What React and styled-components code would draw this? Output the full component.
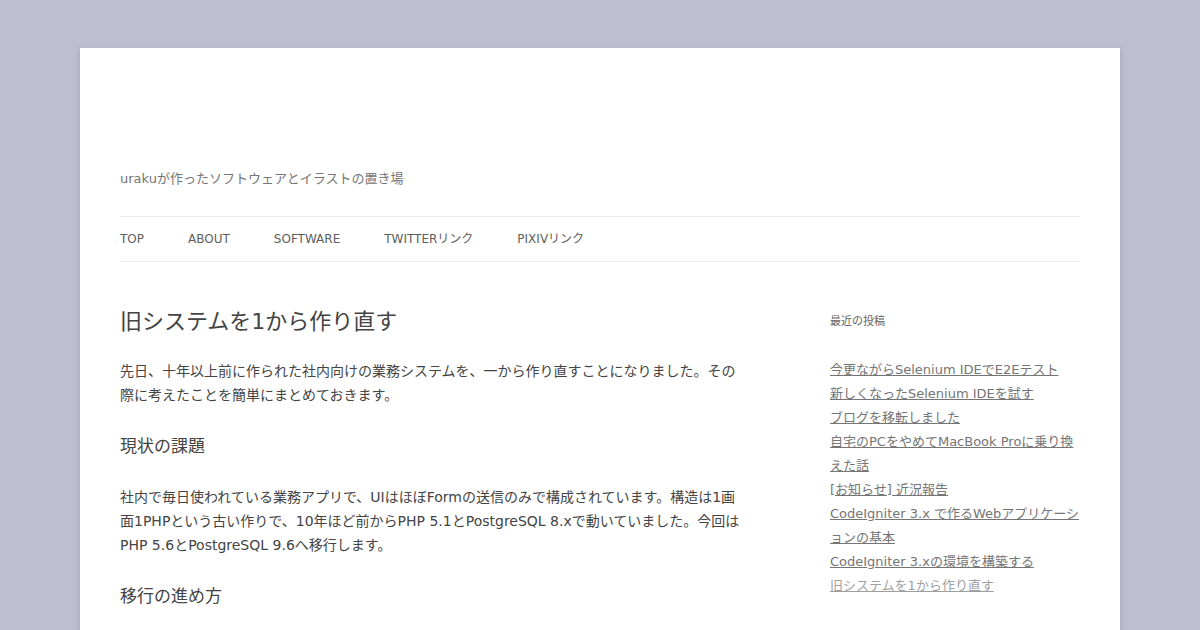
import React from "react";
import styled, { createGlobalStyle } from "styled-components";

const GlobalStyle = createGlobalStyle`
  html, body {
    margin: 0;
    padding: 0;
  }
  body {
    background-color: #bdbecf;
    font-family: "DejaVu Sans", "Noto Sans CJK JP", sans-serif;
    color: #444;
    font-size: 14px;
  }
`;

const menu = ["TOP", "ABOUT", "SOFTWARE", "TWITTERリンク", "PIXIVリンク"];

const recent = [
  { title: "今更ながらSelenium IDEでE2Eテスト" },
  { title: "新しくなったSelenium IDEを試す" },
  { title: "ブログを移転しました" },
  { title: "自宅のPCをやめてMacBook Proに乗り換えた話" },
  { title: "[お知らせ] 近況報告" },
  { title: "CodeIgniter 3.x で作るWebアプリケーションの基本" },
  { title: "CodeIgniter 3.xの環境を構築する" },
  { title: "旧システムを1から作り直す", visited: true },
];

const Page = styled.div`
  width: 960px;
  margin: 48px auto;
  padding: 0 40px;
  background: #fff;
  box-shadow: 0 2px 6px rgba(100, 100, 100, 0.3);
`;

const Header = styled.header`
  padding-top: 24px;
`;

const Logo = styled.div`
  height: 95px;
`;

const Description = styled.h2`
  margin: 0 0 25px;
  font-size: 13px;
  font-weight: normal;
  line-height: 24px;
  color: #757575;
`;

const Nav = styled.nav`
  border-top: 1px solid #ededed;
  border-bottom: 1px solid #ededed;
`;

const Menu = styled.ul`
  display: flex;
  gap: 44px;
  margin: 0;
  padding: 0;
  list-style: none;
`;

const MenuItem = styled.li`
  font-size: 12px;
  line-height: 44px;
  text-transform: uppercase;
  color: #5e5e5e;
`;

const Main = styled.div`
  display: flex;
  justify-content: space-between;
  padding-top: 48px;
  padding-bottom: 48px;
`;

const Content = styled.article`
  width: 625px;
`;

const EntryTitle = styled.h1`
  margin: 0 0 25px;
  font-size: 22px;
  font-weight: normal;
  line-height: 24px;
  color: #444;
`;

const Paragraph = styled.p`
  margin: 0 0 24px;
  font-size: 14px;
  line-height: 24px;
`;

const SubHeading = styled.h2`
  margin: 0 0 24px;
  font-size: 17px;
  font-weight: normal;
  line-height: 30px;
  color: #444;
`;

const Sidebar = styled.aside`
  width: 250px;
`;

const WidgetTitle = styled.h3`
  margin: 0 0 24px;
  font-size: 11px;
  font-weight: normal;
  line-height: 24px;
  color: #636363;
`;

const PostList = styled.ul`
  margin: 0;
  padding: 0;
  list-style: none;
`;

const PostItem = styled.li`
  font-size: 13px;
  line-height: 24px;
`;

const PostLink = styled.a`
  color: ${(p) => (p.$visited ? "#9f9f9f" : "#757575")};
  text-decoration: underline;
`;

export default function App() {
  return (
    <>
      <GlobalStyle />
      <Page>
        <Header>
          <Logo />
          <Description>urakuが作ったソフトウェアとイラストの置き場</Description>
          <Nav>
            <Menu>
              {menu.map((m) => (
                <MenuItem key={m}>{m}</MenuItem>
              ))}
            </Menu>
          </Nav>
        </Header>
        <Main>
          <Content>
            <EntryTitle>旧システムを1から作り直す</EntryTitle>
            <Paragraph>
              先日、十年以上前に作られた社内向けの業務システムを、一から作り直すことになりました。その際に考えたことを簡単にまとめておきます。
            </Paragraph>
            <SubHeading>現状の課題</SubHeading>
            <Paragraph>
              社内で毎日使われている業務アプリで、UIはほぼFormの送信のみで構成されています。構造は1画面1PHPという古い作りで、10年ほど前からPHP 5.1とPostgreSQL 8.xで動いていました。今回はPHP 5.6とPostgreSQL 9.6へ移行します。
            </Paragraph>
            <SubHeading>移行の進め方</SubHeading>
          </Content>
          <Sidebar>
            <WidgetTitle>最近の投稿</WidgetTitle>
            <PostList>
              {recent.map((r) => (
                <PostItem key={r.title}>
                  <PostLink href="#" $visited={r.visited}>
                    {r.title}
                  </PostLink>
                </PostItem>
              ))}
            </PostList>
          </Sidebar>
        </Main>
      </Page>
    </>
  );
}
